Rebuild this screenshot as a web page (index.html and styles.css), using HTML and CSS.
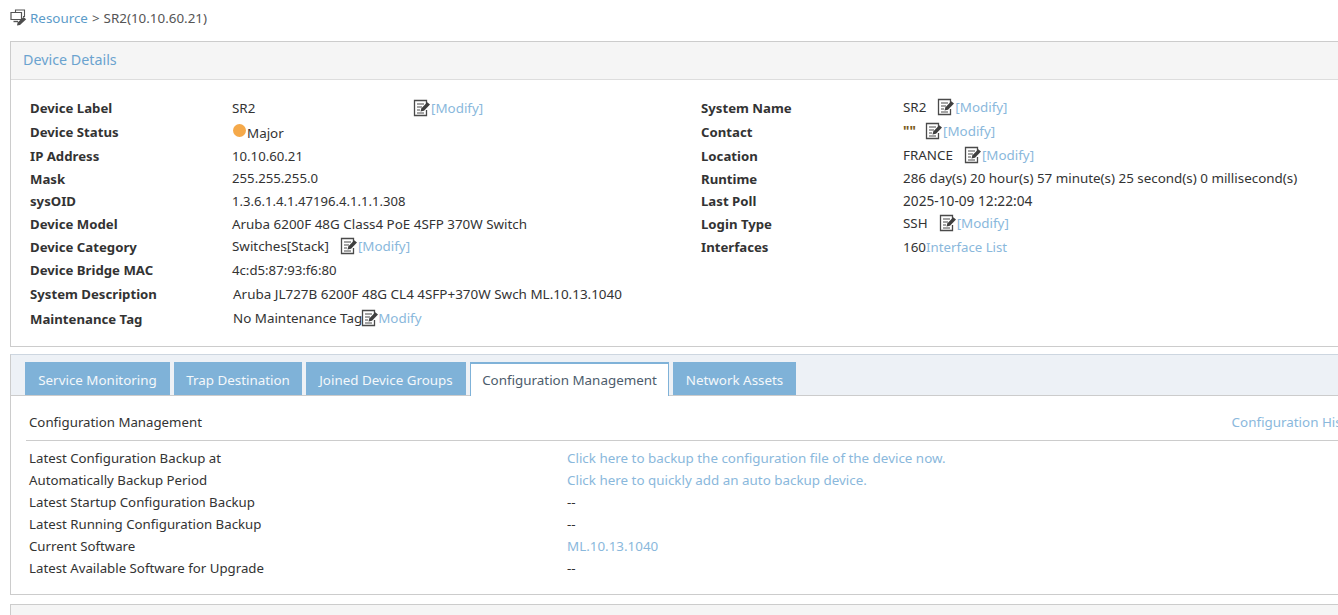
FILE: index.html
```html
<!DOCTYPE html>
<html lang="en">
<head>
<meta charset="utf-8">
<title>SR2 Device Details</title>
<link rel="stylesheet" href="styles.css">
</head>
<body>
<svg class="defs" width="0" height="0" aria-hidden="true">
  <symbol id="edit" viewBox="0 0 18 18">
    <path d="M13.5 6V1.5H1.5V16.5H13.5V11" fill="none" stroke="#4a4a4a" stroke-width="1.3"/>
    <path d="M4 5H11M4 8H9M4 11H7M4 14H11" fill="none" stroke="#4a4a4a" stroke-width="1.1"/>
    <path d="M7.5 12.5L8.3 9.5L14.2 3.2L17 5.6L11 11.7Z" fill="#3f3f3f"/>
  </symbol>
</svg>
<nav class="crumb">
  <svg class="crumb-icon" width="17" height="17" viewBox="0 0 17 17" aria-hidden="true">
    <path d="M5.5 3V1H14.5V7.5H13" fill="none" stroke="#555" stroke-width="1.1"/>
    <path d="M1 3.5H11.5V10.5H1Z" fill="none" stroke="#555" stroke-width="1.2"/>
    <path d="M3.5 12.5H8" fill="none" stroke="#555" stroke-width="1.4"/>
    <path d="M7 16.5L7.6 13.6L13.5 8L16.2 10.3L10 16Z" fill="#4d4d4d"/>
  </svg>
  <a class="link crumb-link">Resource</a>
  <span class="crumb-sep">&gt;</span>
  <span>SR2(10.10.60.21)</span>
</nav>
<section class="panel details">
  <h2 class="panel-title">Device Details</h2>
  <div class="info">
    <b>Device Label</b>
    <span class="val"><span class="fixed">SR2</span><svg class="ic"><use href="#edit"/></svg><a class="mod">[Modify]</a></span>
    <b>System Name</b>
    <span class="val up">SR2<svg class="ic gap"><use href="#edit"/></svg><a class="mod">[Modify]</a></span>

    <b>Device Status</b>
    <span class="val"><i class="dot"></i><span class="major">Major</span></span>
    <b>Contact</b>
    <span class="val up"><span class="quote">""</span><svg class="ic gap2"><use href="#edit"/></svg><a class="mod">[Modify]</a></span>

    <b>IP Address</b>
    <span class="val num">10.10.60.21</span>
    <b>Location</b>
    <span class="val up">FRANCE<svg class="ic gap"><use href="#edit"/></svg><a class="mod">[Modify]</a></span>

    <b>Mask</b>
    <span class="val num">255.255.255.0</span>
    <b>Runtime</b>
    <span class="val">286 day(s) 20 hour(s) 57 minute(s) 25 second(s) 0 millisecond(s)</span>

    <b>sysOID</b>
    <span class="val oid">1.3.6.1.4.1.47196.4.1.1.1.308</span>
    <b>Last Poll</b>
    <span class="val stamp">2025-10-09 12:22:04</span>

    <b>Device Model</b>
    <span class="val">Aruba 6200F 48G Class4 PoE 4SFP 370W Switch</span>
    <b>Login Type</b>
    <span class="val up">SSH<svg class="ic gap"><use href="#edit"/></svg><a class="mod">[Modify]</a></span>

    <b>Device Category</b>
    <span class="val up">Switches[Stack]<svg class="ic gap"><use href="#edit"/></svg><a class="mod">[Modify]</a></span>
    <b>Interfaces</b>
    <span class="val">160<a class="mod list">Interface List</a></span>

    <b>Device Bridge MAC</b>
    <span class="val wide num">4c:d5:87:93:f6:80</span>

    <b>System Description</b>
    <span class="val wide nudge desc">Aruba JL727B 6200F 48G CL4 4SFP+370W Swch ML.10.13.1040</span>

    <b class="low">Maintenance Tag</b>
    <span class="val wide nudge up">No Maintenance Tag<svg class="ic tight"><use href="#edit"/></svg><a class="mod">Modify</a></span>
  </div>
</section>
<section class="panel config">
  <div class="tabs">
    <a class="tab t1">Service Monitoring</a>
    <a class="tab t2">Trap Destination</a>
    <a class="tab t3">Joined Device Groups</a>
    <a class="tab t4 active">Configuration Management</a>
    <a class="tab t5">Network Assets</a>
  </div>
  <div class="tab-body">
    <div class="cfg-head">
      <span class="cfg-label">Configuration Management</span>
      <a class="mod">Configuration History</a>
    </div>
    <div class="cfg-rows">
      <span class="cfg-label">Latest Configuration Backup at</span><a class="mod">Click here to backup the configuration file of the device now.</a>
      <span class="cfg-label">Automatically Backup Period</span><a class="mod">Click here to quickly add an auto backup device.</a>
      <span class="cfg-label">Latest Startup Configuration Backup</span><span>--</span>
      <span class="cfg-label">Latest Running Configuration Backup</span><span>--</span>
      <span class="cfg-label">Current Software</span><a class="mod">ML.10.13.1040</a>
      <span class="cfg-label">Latest Available Software for Upgrade</span><span>--</span>
    </div>
  </div>
</section>
<section class="panel stub"></section>
</body>
</html>
```
FILE: styles.css
```css
html, body {
  margin: 0;
  height: 615px;
  overflow: hidden;
  background: #fff;
}
body {
  width: 1367px;
  font: 13.4px/20px "Noto Sans", "Open Sans", sans-serif;
  color: #333;
}
.defs { display: block; height: 0; }
.crumb {
  display: flex;
  align-items: center;
  height: 35px;
  padding: 0 0 2px 10px;
  color: #555;
}
.crumb-icon { margin-right: 3px; }
.crumb-link { color: #5b9bc9; }
.crumb-sep { margin: 0 4px; }
.panel {
  margin: 4px 0 0 10px;
  border: 1px solid #ccc;
  border-right: 0;
}
.panel-title {
  margin: 0;
  height: 37px;
  padding-left: 12px;
  border-bottom: 1px solid #ddd;
  background: #f5f5f5;
  font: 14.3px/35px "Noto Sans", sans-serif;
  color: #6ba3cf;
}
.details { height: 306px; box-sizing: border-box; }
.info {
  display: grid;
  grid-template-columns: 202px 469px 202px 1fr;
  grid-template-rows: 24px 24px 23px 22px 23px 23px 23px 24px 24px 25px;
  padding: 16px 0 0 19px;
}
.info b {
  font-size: 13.2px;
  font-weight: 700;
  color: #333;
  line-height: 24px;
}
.info .low { line-height: 26px; }
.val {
  display: flex;
  align-items: center;
  line-height: 24px;
  white-space: nowrap;
}
.num { font-size: 13.2px; }
.oid { font-size: 13.1px; }
.stamp { font-size: 13.7px; }
.desc { font-size: 13.45px; }
.list { font-size: 13.25px; }
.up { position: relative; top: -1px; }
.wide { grid-column: 2 / 5; }
.nudge { padding-left: 1px; }
.fixed { width: 181px; }
.dot {
  width: 13px;
  height: 13px;
  margin: -4px 1px 0 1px;
  border-radius: 50%;
  background: #f5a94a;
}
.major { padding-top: 2px; }
.quote { width: 11px; font-weight: 700; color: #7a5a20; }
.ic { width: 18px; height: 18px; flex: none; }
.gap { margin-left: 11px; }
.gap2 { margin-left: 11px; }
.tight { margin: 0 -1px; }
.mod { color: #8ab8dc; }
.config { margin-top: 7px; border-top-color: #cdd6e0; }
.tabs {
  display: flex;
  gap: 4px;
  height: 41px;
  padding: 7px 0 0 14px;
  box-sizing: border-box;
  background: #edf1f6;
  border-bottom: 1px solid #ccc;
}
.tab {
  box-sizing: border-box;
  text-align: center;
  height: 33px;
  line-height: 36px;
  background: #7fb2d8;
  color: #f4f8fb;
}
.t1 { width: 145px; }
.t2 { width: 128px; }
.t3 { width: 160px; }
.t4 { width: 199px; }
.t5 { width: 123px; }
.tab.active {
  height: 34px;
  border: 2px solid #7fb2d8;
  border-width: 2px 1px 0;
  margin-bottom: -1px;
  line-height: 33px;
  background: #fff;
  color: #4c5c6c;
}
.tab-body { padding: 0 0 15px 15px; }
.cfg-head {
  display: flex;
  justify-content: space-between;
  align-items: center;
  box-sizing: border-box;
  height: 45px;
  padding: 8px 0 0 3px;
  border-bottom: 1px solid #ccc;
}
.cfg-label { font-size: 13.25px; }
.cfg-rows {
  display: grid;
  grid-template-columns: 538px 1fr;
  grid-auto-rows: 22px;
  padding: 6px 0 0 3px;
  line-height: 22px;
}
.stub {
  height: 30px;
  margin-top: 9px;
  background: #f5f5f5;
}
```
